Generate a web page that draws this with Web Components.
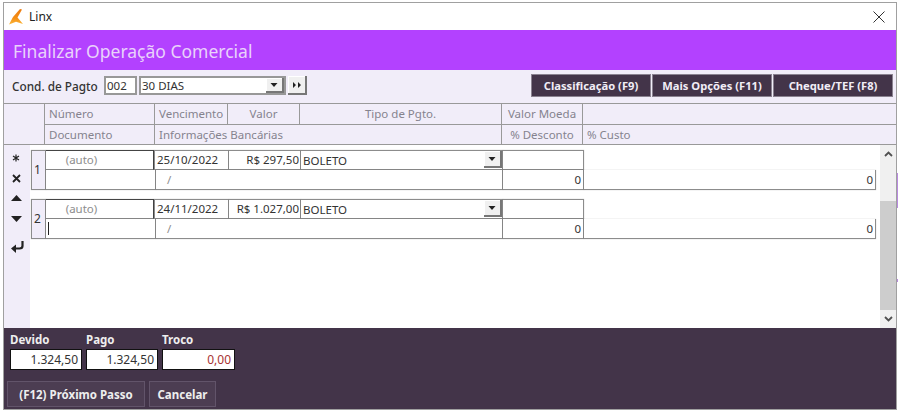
<!DOCTYPE html>
<html lang="pt-BR">
<head>
<meta charset="utf-8">
<title>Linx</title>
<style>
  html, body { margin: 0; height: 100%; background: #fff; overflow: hidden; }
  body { font: 11.5px "Noto Sans", "Open Sans", sans-serif; color: #333; }
</style>
</head>
<body>
<app-window>
  <title-bar slot="title">Linx</title-bar>
  <page-banner slot="banner">Finalizar Operação Comercial</page-banner>
  <pay-toolbar slot="toolbar"></pay-toolbar>
  <grid-header slot="header"></grid-header>
  <side-tools slot="tools"></side-tools>
  <div slot="rows">
    <payment-row num="1" due="25/10/2022" value="R$ 297,50"></payment-row>
    <payment-row num="2" due="24/11/2022" value="R$ 1.027,00" caret></payment-row>
  </div>
  <scroll-bar slot="scroll"></scroll-bar>
  <totals-panel slot="footer"></totals-panel>
</app-window>

<script>
// every component just writes its markup in an open shadow root
class Base extends HTMLElement {
  connectedCallback() {
    if (!this.shadowRoot) this.attachShadow({ mode: 'open' }).innerHTML = this.render();
  }
}

// WINDOW
class AppWindow extends Base {
  render() {
    return `
    <style>
      :host { display: block; position: relative; width: 900px; height: 411px; box-sizing: border-box; padding: 2px 3px 1px 3px; }
      .frame { height: 100%; box-sizing: border-box; border: 1px solid #a0a0a0; display: flex; flex-direction: column; }
      .body { height: 183px; display: flex; background: #fff; }
      .rows { flex: 1; padding-top: 5px; }
      /* the app behind the dialog shows through at the right edge */
      .peek { position: absolute; left: 897px; width: 1px; background: #b98ae0; }
    </style>
    <div class="frame">
      <slot name="title"></slot>
      <slot name="banner"></slot>
      <slot name="toolbar"></slot>
      <slot name="header"></slot>
      <div class="body">
        <slot name="tools"></slot>
        <div class="rows"><slot name="rows"></slot></div>
        <slot name="scroll"></slot>
      </div>
      <slot name="footer"></slot>
    </div>
    <i class="peek" style="top:173px;height:35px"></i>
    <i class="peek" style="top:279px;height:3px"></i>`;
  }
}

class TitleBar extends Base {
  render() {
    return `
    <style>
      :host { display: flex; align-items: center; height: 27px; background: #fff; color: #222; font-size: 12px; }
      svg.logo { margin: 0 6px 0 5px; }
      .text { flex: 1; }
      svg.close { margin-right: 11px; }
    </style>
    <svg class="logo" width="14" height="16" viewBox="0 0 14 16">
      <defs><linearGradient id="g" x1="0" y1="0" x2="0" y2="1">
        <stop offset="0" stop-color="#ec7a10"/><stop offset=".6" stop-color="#f58f16"/><stop offset="1" stop-color="#fbb73a"/></linearGradient></defs>
      <path d="M11 0 L13 .5 L8.500 8.500 L14 15 L7 12.800 L0 15.500 L4 8 Z" fill="url(#g)"/>
    </svg>
    <span class="text"><slot></slot></span>
    <svg class="close" width="12" height="12" viewBox="0 0 12 12"><path d="M.5 .5 L11.500 11.500 M11.500 .5 L.5 11.500" stroke="#333" stroke-width="1" fill="none"/></svg>`;
  }
}

class PageBanner extends Base {
  render() {
    return `
    <style>
      :host { display: flex; align-items: center; height: 40px; box-sizing: border-box; padding: 2px 0 0 9px; background: #b341ff; color: #e9d2fb; font-size: 17.500px; }
    </style>
    <slot></slot>`;
  }
}

// TOOLBAR
class PayToolbar extends Base {
  render() {
    return `
    <style>
      :host { display: flex; align-items: center; height: 33px; box-sizing: border-box; padding: 0 3px 2px 8px; background: #f1edf9; color: #333; }
      .label { width: 92px; font-size: 11.800px; font-weight: 500; }
      .box { height: 19px; box-sizing: border-box; border: 2px solid #989898; background: #fff; display: flex; align-items: center; padding-left: 1px; }
      .code { width: 33px; }
      .select { width: 147px; margin-left: 2px; justify-content: space-between; padding-right: 0; }
      .spacer { flex: 1; }
      .next { margin-left: 2px; }
      .btns { display: flex; gap: 1px; }
      drop-button { height: 15px; }
      .next { height: 19px; }
    </style>
    <span class="label">Cond. de Pagto</span>
    <span class="box code">002</span>
    <span class="box select">30 DIAS<drop-button></drop-button></span>
    <drop-button class="next" glyph="next"></drop-button>
    <span class="spacer"></span>
    <span class="btns">
      <dark-button>Classificação (F9)</dark-button>
      <dark-button>Mais Opções (F11)</dark-button>
      <dark-button>Cheque/TEF (F8)</dark-button>
    </span>`;
  }
}

class DropButton extends Base {
  render() {
    const next = this.getAttribute('glyph') === 'next';
    const glyph = next
      ? '<path d="M2 1 L5 4 L2 7 Z M7 1 L10 4 L7 7 Z" fill="#222"/>'
      : '<path d="M1.500 2 L8.500 2 L5 6 Z" fill="#222"/>';
    return `
    <style>
      :host { display: flex; align-items: center; justify-content: center; box-sizing: border-box; width: ${next ? 19 : 18}px; height: 17px; background: #f0f0f0; border: solid #777; border-width: 0 2px 2px 0; box-shadow: inset 1px 1px 0 #fff; }
    </style>
    <svg width="${next ? 12 : 10}" height="8" viewBox="0 0 ${next ? 12 : 10} 8">${glyph}</svg>`;
  }
}

class DarkButton extends Base {
  render() {
    return `
    <style>
      :host { display: flex; align-items: center; justify-content: center; width: 120px; height: 23px; box-sizing: border-box; background: #433449; border: 1px solid #8a8290; color: #f1edf6; font-weight: 700; font-size: 11.200px; }
    </style>
    <slot></slot>`;
  }
}

// GRID HEADER
class GridHeader extends Base {
  render() {
    return `
    <style>
      :host { display: grid; grid-template-columns: 41px 110px 73px 72px 202px 81px 1fr; grid-template-rows: 21px 20px; height: 42px; box-sizing: border-box; background: #f1edf9; color: #85838e; border: solid #999; border-width: 1px 0 1px 0; }
      div { display: flex; align-items: center; border-right: 1px solid #999; border-bottom: 1px solid #999; padding: 0 0 2px 4px; box-sizing: border-box; white-space: nowrap; }
      .c { justify-content: center; padding-left: 0; }
      .blank { grid-row: span 2; border-bottom: 0; }
      .info { grid-column: span 3; }
      .r2 { border-bottom: 0; }
      .end { border-right: 0; }
    </style>
    <div class="blank"></div>
    <div>Número</div><div>Vencimento</div><div class="c">Valor</div><div class="c">Tipo de Pgto.</div><div class="c">Valor Moeda</div><div class="end"></div>
    <div class="r2">Documento</div><div class="r2 info">Informações Bancárias</div><div class="r2 c">% Desconto</div><div class="r2 end">% Custo</div>`;
  }
}

// LEFT COLUMN OF ACTIONS
class SideTools extends Base {
  render() {
    return `
    <style>
      :host { display: flex; flex-direction: column; align-items: center; width: 26px; background: #f1edf9; color: #222; padding: 3px 2px 0 0; box-sizing: border-box; }
      span { height: 20px; display: flex; align-items: center; justify-content: center; }
      .down { margin-top: 1px; }
      .enter { margin-top: 7px; }
    </style>
    <span><svg width="8" height="8" viewBox="0 0 8 8"><path d="M4 .5 V7.500 M1 2 L7 6 M7 2 L1 6" stroke="#222" stroke-width="1.200"/></svg></span>
    <span><svg width="9" height="9" viewBox="0 0 9 9"><path d="M1 1 L8 8 M8 1 L1 8" stroke="#222" stroke-width="1.800"/></svg></span>
    <span><svg width="11" height="6" viewBox="0 0 11 6"><path d="M5.500 0 L11 6 H0 Z" fill="#222"/></svg></span>
    <span class="down"><svg width="11" height="6" viewBox="0 0 11 6"><path d="M0 0 H11 L5.500 6 Z" fill="#222"/></svg></span>
    <span class="enter"><svg width="13" height="13" viewBox="0 0 13 13" style="margin-left:3px"><path d="M11.500 1 V6 Q11.500 8.500 8.500 8.500 H3" stroke="#222" stroke-width="2.200" fill="none"/><path d="M5 4.500 V13 L0 8.500 Z" fill="#222"/></svg></span>`;
  }
}

// ONE PAYMENT (two lines of cells)
class PaymentRow extends Base {
  render() {
    const caret = this.hasAttribute('caret') ? '<i class="caret"></i>' : '';
    return `
    <style>
      :host { display: grid; grid-template-columns: 15px 110px 73px 72px 202px 81px 292px; grid-template-rows: 20px 20px; width: 845px; margin: 0 0 9px 1px; color: #333; }
      div { box-sizing: border-box; display: flex; align-items: center; background: #fff; border: solid #8c8c8c; border-width: 1px 1px 1px 0; white-space: nowrap; padding-bottom: 1px; box-shadow: 0 0 1px rgba(0,0,0,.25); }
      .num { grid-row: span 2; background: #f1edf9; border-left: 1px solid #8c8c8c; font-size: 12px; padding-left: 2px; }
      .numero { justify-content: center; padding-right: 36px; color: #8d8d8d; border-color: #444 #444 #8c8c8c #8c8c8c; margin-right: 2px; }
      .due { padding-left: 2px; margin-left: -2px; border-left: 1px solid #8c8c8c; }
      .val { justify-content: flex-end; padding-right: 1px; }
      .tipo { padding-left: 2px; justify-content: space-between; padding-bottom: 0; }
      .blank { grid-column: 7; grid-row: 1; border: 0; background: transparent; box-shadow: none; }
      .b { border-top: 0; }
      .doc { border-left: 0; }
      .info { grid-column: span 3; padding-left: 11px; color: #8d8d8d; }
      .n { justify-content: flex-end; padding-right: 2px; }
      .caret { width: 1px; height: 13px; background: #222; margin-left: 2px; }
      drop-button { margin-top: -1px; }
    </style>
    <div class="num">${this.getAttribute('num')}</div>
    <div class="numero">(auto)</div>
    <div class="due">${this.getAttribute('due')}</div>
    <div class="val">${this.getAttribute('value')}</div>
    <div class="tipo">BOLETO<drop-button></drop-button></div>
    <div></div>
    <div class="blank"></div>
    <div class="b doc">${caret}</div>
    <div class="b info">/</div>
    <div class="b n">0</div>
    <div class="b n">0</div>`;
  }
}

class ScrollBar extends Base {
  render() {
    return `
    <style>
      :host { display: flex; flex-direction: column; width: 16px; background: #f0f0f0; }
      span { height: 18px; display: flex; align-items: center; justify-content: center; }
      .track { flex: 1; }
      .thumb { height: 109px; background: #cdcdcd; }
      .gap { height: 38px; }
    </style>
    <span><svg width="9" height="6" viewBox="0 0 9 6"><path d="M1 5 L4.500 1.500 L8 5" stroke="#505050" stroke-width="1.800" fill="none"/></svg></span>
    <div class="gap"></div>
    <div class="thumb"></div>
    <div class="track"></div>
    <span><svg width="9" height="6" viewBox="0 0 9 6"><path d="M1 1 L4.500 4.500 L8 1" stroke="#505050" stroke-width="1.800" fill="none"/></svg></span>`;
  }
}

// FOOTER
class TotalsPanel extends Base {
  render() {
    return `
    <style>
      :host { flex: 1; display: flex; flex-direction: column; background: #433449; color: #eee; padding: 5px 0 0 3px; box-sizing: border-box; }
      .fields { display: flex; gap: 4px; padding-left: 3px; }
      .field { width: 72px; font-weight: 700; display: flex; flex-direction: column; gap: 2px; }
      .field:last-child { width: 73px; }
      .field span { height: 14px; line-height: 14px; }
      .field output { height: 21px; box-sizing: border-box; background: #fff; border: 1px solid #111; color: #333; font-weight: 400; font-size: 12px; display: flex; align-items: center; justify-content: flex-end; padding-right: 3px; }
      .field .red { color: #a83232; }
      .actions { display: flex; gap: 4px; margin-top: 11px; }
      button-lite { height: 26px; }
    </style>
    <div class="fields">
      <label class="field"><span>Devido</span><output>1.324,50</output></label>
      <label class="field"><span>Pago</span><output>1.324,50</output></label>
      <label class="field"><span>Troco</span><output class="red">0,00</output></label>
    </div>
    <div class="actions">
      <button-lite style="width:138px">(F12) Próximo Passo</button-lite>
      <button-lite style="width:67px">Cancelar</button-lite>
    </div>`;
  }
}

class ButtonLite extends Base {
  render() {
    return `
    <style>
      :host { display: flex; align-items: center; justify-content: center; box-sizing: border-box; background: #4c3d52; border: 1px solid #62546a; color: #eee; font-weight: 700; }
    </style>
    <slot></slot>`;
  }
}

customElements.define('drop-button', DropButton);
customElements.define('dark-button', DarkButton);
customElements.define('button-lite', ButtonLite);
customElements.define('title-bar', TitleBar);
customElements.define('page-banner', PageBanner);
customElements.define('pay-toolbar', PayToolbar);
customElements.define('grid-header', GridHeader);
customElements.define('side-tools', SideTools);
customElements.define('payment-row', PaymentRow);
customElements.define('scroll-bar', ScrollBar);
customElements.define('totals-panel', TotalsPanel);
customElements.define('app-window', AppWindow);
</script>
</body>
</html>
